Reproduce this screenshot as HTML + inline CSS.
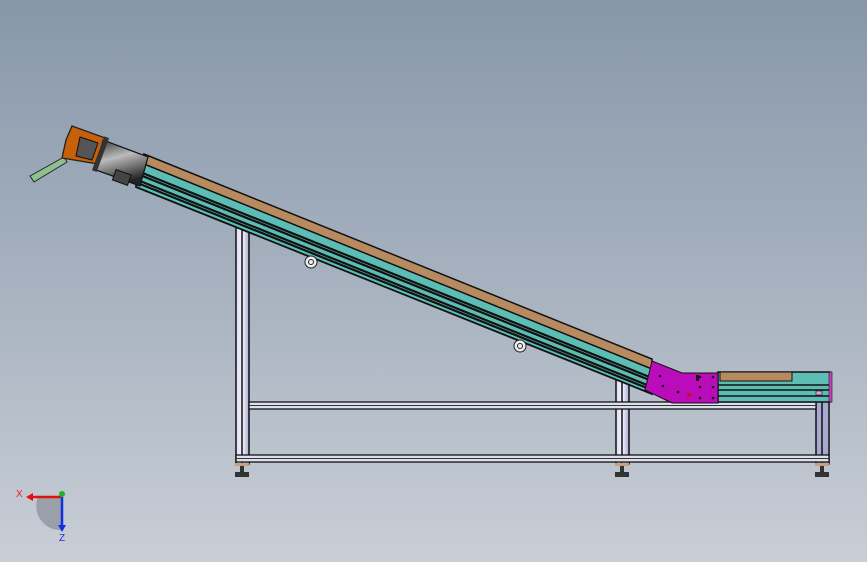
<!DOCTYPE html>
<html><head><style>
html,body{margin:0;padding:0;width:867px;height:562px;overflow:hidden}
body{background:linear-gradient(#8797aa 0%,#a3afbd 45%,#c9ced6 100%)}
svg{position:absolute;left:0;top:0}
</style></head><body>
<svg width="867" height="562" viewBox="0 0 867 562" font-family="Liberation Sans, sans-serif">
<defs>
<linearGradient id="leg" x1="0" x2="1"><stop offset="0" stop-color="#dcdcf4"/><stop offset="0.5" stop-color="#f4f4ff"/><stop offset="1" stop-color="#a8a8d0"/></linearGradient>
<linearGradient id="cyl" x1="0" y1="0" x2="0.3" y2="1"><stop offset="0" stop-color="#333"/><stop offset="0.45" stop-color="#bbb"/><stop offset="1" stop-color="#222"/></linearGradient>
</defs>
<g stroke="#111" stroke-width="1.5">
<rect x="236" y="226" width="13" height="238" fill="url(#leg)"/>
<rect x="616" y="380" width="13" height="84" fill="url(#leg)"/>
<rect x="816" y="398" width="13" height="66" fill="#a8a8d0"/>
<line x1="242" y1="226" x2="242" y2="464"/>
<line x1="622" y1="380" x2="622" y2="464"/>
<line x1="822" y1="398" x2="822" y2="464"/>
</g>
<g fill="#dde0ee" stroke="#111" stroke-width="1.3">
<rect x="249" y="402" width="567" height="7"/>
<rect x="236" y="455" width="593" height="7"/>
</g>
<line x1="249" y1="405.5" x2="816" y2="405.5" stroke="#333" stroke-width="1"/>
<line x1="236" y1="458.5" x2="829" y2="458.5" stroke="#333" stroke-width="1"/>
<g fill="#333">
<rect x="235" y="463" width="14" height="3" fill="#c8a080"/><rect x="240" y="466" width="4" height="6"/><rect x="235" y="472" width="14" height="5"/>
<rect x="615" y="463" width="14" height="3" fill="#c8a080"/><rect x="620" y="466" width="4" height="6"/><rect x="615" y="472" width="14" height="5"/>
<rect x="815" y="463" width="14" height="3" fill="#c8a080"/><rect x="820" y="466" width="4" height="6"/><rect x="815" y="472" width="14" height="5"/>
</g>
<!-- inclined conveyor -->
<polygon points="138,156 652,363 652,394 136,187" fill="#5cbdb5" stroke="#111" stroke-width="1.8"/>
<polygon points="144,154 652,359 652,369 144,164" fill="#b88a60" stroke="#111" stroke-width="1.5"/>
<g stroke="#111" stroke-width="2.2">
<line x1="140" y1="172" x2="652" y2="378"/>
<line x1="140" y1="175" x2="652" y2="381"/>
<line x1="140" y1="181" x2="652" y2="387"/>
<line x1="140" y1="184" x2="652" y2="390"/>
</g>
<circle cx="311" cy="262" r="6" fill="#eee" stroke="#222"/><circle cx="311" cy="262" r="2.5" fill="none" stroke="#222"/>
<circle cx="520" cy="346" r="6" fill="#eee" stroke="#222"/><circle cx="520" cy="346" r="2.5" fill="none" stroke="#222"/>
<rect x="718" y="372" width="112" height="30" fill="#5cbdb5" stroke="#111" stroke-width="1.5"/>
<rect x="720" y="372" width="72" height="9" fill="#b88a60" stroke="#111"/>
<line x1="718" y1="385" x2="830" y2="385" stroke="#111" stroke-width="1.5"/>
<line x1="718" y1="390" x2="830" y2="390" stroke="#111" stroke-width="1.5"/>
<line x1="718" y1="396" x2="830" y2="396" stroke="#111" stroke-width="1.5"/>
<rect x="829" y="372" width="3" height="30" fill="#d040c0" stroke="#111" stroke-width="0.6"/>
<rect x="816" y="391" width="6" height="4" fill="#e0a0e0" stroke="#111" stroke-width="0.6"/>
<polygon points="652,361 682,373 718,373 718,403 672,403 645,390" fill="#bb0cbb" stroke="#111" stroke-width="1"/>
<g fill="#111"><circle cx="700" cy="377" r="1.3"/><circle cx="700" cy="387" r="1.3"/><circle cx="700" cy="398" r="1.3"/><circle cx="713" cy="377" r="1.3"/><circle cx="713" cy="387" r="1.3"/><circle cx="713" cy="398" r="1.3"/><rect x="696" y="375" width="3" height="6"/><circle cx="660" cy="376" r="1.3"/><circle cx="663" cy="386" r="1.3"/><circle cx="678" cy="392" r="1.3"/></g>
<circle cx="689" cy="395" r="2" fill="#d01010"/>
<!-- drive -->
<polygon points="30,176 64,157 67,162 34,182" fill="#8fc090" stroke="#222"/>
<polygon points="72,126 108,139 98,164 62,158 66,140" fill="#c8600a" stroke="#222" stroke-width="1.3"/>
<polygon points="80,137 98,143 92,160 76,156" fill="#555" stroke="#111"/>
<polygon points="103,140 148,157 140,186 96,170" fill="url(#cyl)" stroke="#111" stroke-width="1.2"/>
<rect x="98" y="136" width="5" height="36" fill="#333" transform="rotate(20 100 154)"/>
<rect x="114" y="172" width="16" height="11" fill="#444" stroke="#111" transform="rotate(20 122 177)"/>
<path d="M38,497 A24,24 0 0,0 62,530 L62,497 Z" fill="#9aa0aa"/>
<line x1="62" y1="497" x2="30" y2="497" stroke="#e01010" stroke-width="2.5"/>
<polygon points="26,497 33,493 33,501" fill="#e01010"/>
<line x1="62" y1="497" x2="62" y2="528" stroke="#1030e0" stroke-width="2.5"/>
<polygon points="62,532 58,525 66,525" fill="#1030e0"/>
<circle cx="62" cy="494" r="3" fill="#20b020"/>
<text x="16" y="497" font-size="10" fill="#e02020">X</text>
<text x="59" y="541" font-size="10" fill="#2030e0">Z</text>
</svg>
</body></html>
